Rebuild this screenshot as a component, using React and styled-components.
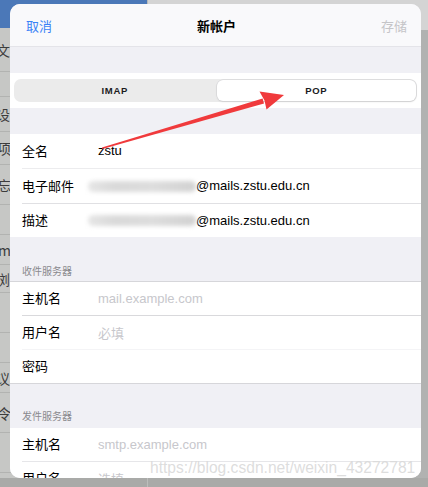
import React from 'react';
import styled, { createGlobalStyle } from 'styled-components';

const GlobalStyle = createGlobalStyle`
  html, body { margin: 0; padding: 0; background: #acadac; }
  body { font-family: "Liberation Sans", "Noto Sans CJK SC", sans-serif; }
`;

const Page = styled.div`
  position: relative;
  width: 428px;
  height: 487px;
  overflow: hidden;
  display: flex;
  flex-direction: column;
  background: #acadac;
`;

const Content = styled.div`
  flex: 1;
  display: flex;
  min-height: 0;
`;

const BottomBar = styled.div`
  height: 9px;
  flex: none;
  display: flex;
  background: #a9aaa8;
`;

const BottomCell = styled.div`
  width: 147px;
  flex: none;
  border-right: 1px solid #bcbdbb;
`;

const Sidebar = styled.div`
  width: 147px;
  flex: none;
  display: flex;
  flex-direction: column;
  overflow: hidden;
  background: #c6c7c5;
  border-right: 1px solid #b9bab8;
`;

const SideHeader = styled.div`
  height: 28px;
  flex: none;
  background: #4b78b8;
`;

const SideRow = styled.div`
  height: ${p => p.$h}px;
  flex: none;
  box-sizing: border-box;
  border-bottom: 1px solid #b2b3b1;
  display: flex;
  align-items: center;
`;

const SideClip = styled.div`
  width: 10px;
  overflow: hidden;
  display: flex;
`;

const SideText = styled.span`
  flex: none;
  margin-left: ${p => p.$x}px;
  font-family: "Noto Sans CJK SC", sans-serif;
  font-size: 14px;
  color: #3c3c3c;
  white-space: nowrap;
`;

const Main = styled.div`
  flex: 1;
  display: flex;
  flex-direction: column;
`;

const MainTop = styled.div`
  height: 30px;
  flex: none;
  background: #d4d4d4;
`;

const MainBody = styled.div`
  flex: 1;
  background: #b1b2b1;
`;

const Sheet = styled.div`
  position: absolute;
  left: 10px;
  top: 4px;
  width: 411px;
  height: 474px;
  border-radius: 10px;
  overflow: hidden;
  background: #f0f0f5;
  display: flex;
  flex-direction: column;
`;

const NavBar = styled.div`
  height: 43px;
  flex: none;
  box-sizing: border-box;
  background: #f9f9fb;
  border-bottom: 1px solid #e4e4e9;
  display: grid;
  grid-template-columns: 1fr auto 1fr;
  align-items: center;
  padding: 0 14px 0 16px;
  font-family: "Noto Sans CJK SC", sans-serif;
  font-size: 13px;
`;

const NavButton = styled.span`
  color: ${p => (p.$disabled ? '#c5c5c8' : '#3a82f6')};
  justify-self: ${p => (p.$end ? 'end' : 'start')};
`;

const NavTitle = styled.span`
  font-weight: 600;
  color: #000;
`;

const Gap = styled.div`
  height: ${p => p.$h}px;
  flex: none;
`;

const SegBand = styled.div`
  height: 35px;
  flex: none;
  box-sizing: border-box;
  background: #fff;
  padding: 6px 4px 0 4px;
`;

const Segmented = styled.div`
  height: 23px;
  box-sizing: border-box;
  background: #ebebeb;
  border-radius: 7px;
  padding: 1px;
  display: grid;
  grid-template-columns: 1fr 1fr;
  gap: 2px;
`;

const Segment = styled.div`
  display: flex;
  align-items: center;
  justify-content: center;
  border-radius: 6px;
  font-size: 9.5px;
  font-weight: 700;
  letter-spacing: 0.7px;
  color: #1c1c1e;
  background: ${p => (p.$active ? '#fff' : 'transparent')};
  box-shadow: ${p => (p.$active ? '0 0 0 0.5px #cfcfd2, 0 1px 2px rgba(0,0,0,0.1)' : 'none')};
`;

const Group = styled.div`
  flex: none;
  background: #fff;
  display: flex;
  flex-direction: column;
  border-top: ${p => (p.$top ? `1px solid ${p.$top}` : 'none')};
  border-bottom: ${p => (p.$bottom ? `1px solid ${p.$bottom}` : 'none')};
`;

const Row = styled.div`
  height: ${p => p.$h}px;
  flex: none;
  box-sizing: border-box;
  margin-left: 12px;
  border-top: ${p => (p.$sep ? `1px solid ${p.$sep}` : 'none')};
  display: grid;
  grid-template-columns: 76px 1fr;
  align-items: center;
  font-size: 13px;
  color: #000;
`;

const Label = styled.span`
  font-family: "Noto Sans CJK SC", sans-serif;
  line-height: 16px;
  margin-top: -1px;
`;

const Value = styled.span`
  display: flex;
  align-items: center;
  white-space: nowrap;
  line-height: 16px;
  color: ${p => (p.$placeholder ? '#c7c7cc' : '#000')};
  font-family: ${p => (p.$cjk ? '"Noto Sans CJK SC", sans-serif' : '"Liberation Sans", sans-serif')};
`;

const Blur = styled.span`
  display: inline-block;
  width: ${p => p.$w}px;
  height: 11px;
  margin-left: ${p => p.$ml}px;
  border-radius: 5px;
  background: linear-gradient(90deg, #e6e6e6 0%, #d9d9d9 25%, #dddddd 60%, #d2d2d2 100%);
  filter: blur(2px);
`;

const SectionHeader = styled.div`
  height: 44px;
  flex: none;
  box-sizing: border-box;
  display: flex;
  align-items: flex-end;
  padding: 0 0 ${p => p.$pb}px 12px;
  font-family: "Noto Sans CJK SC", sans-serif;
  font-size: 10px;
  line-height: 14px;
  color: #8a8a8e;
`;

const Overlay = styled.svg`
  position: absolute;
  left: 0;
  top: 0;
  pointer-events: none;
`;

const Watermark = styled.div`
  position: absolute;
  left: 150px;
  top: 459px;
  font-family: "Liberation Sans", sans-serif;
  font-size: 15.6px;
  line-height: 18px;
  color: rgba(218, 218, 218, 0.92);
  white-space: nowrap;
  pointer-events: none;
`;

const sideRows = [
  { h: 44, x: -4, t: '文' },
  { h: 25, x: 0, t: '' },
  { h: 35, x: -4, t: '设' },
  { h: 33, x: -17, t: '事项' },
  { h: 40, x: -17, t: '帮忘' },
  { h: 30, x: 0, t: '' },
  { h: 30, x: -2, t: 'm' },
  { h: 28, x: -4, t: '浏' },
  { h: 40, x: 0, t: '' },
  { h: 30, x: 0, t: '' },
  { h: 30, x: -4, t: '议' },
  { h: 40, x: -17, t: '指令' },
  { h: 40, x: 0, t: '' },
];

export default function App() {
  return (
    <>
      <GlobalStyle />
      <Page>
        <Content>
          <Sidebar>
            <SideHeader />
            {sideRows.map((r, i) => (
              <SideRow key={i} $h={r.h}>
                {r.t && (
                  <SideClip>
                    <SideText $x={r.x}>{r.t}</SideText>
                  </SideClip>
                )}
              </SideRow>
            ))}
          </Sidebar>
          <Main>
            <MainTop />
            <MainBody />
          </Main>
        </Content>
        <BottomBar>
          <BottomCell />
        </BottomBar>

        <Sheet>
          <NavBar>
            <NavButton>取消</NavButton>
            <NavTitle>新帐户</NavTitle>
            <NavButton $end $disabled>存储</NavButton>
          </NavBar>
          <Gap $h={26} />
          <SegBand>
            <Segmented>
              <Segment>IMAP</Segment>
              <Segment $active>POP</Segment>
            </Segmented>
          </SegBand>
          <Gap $h={26} />
          <Group>
            <Row $h={34}>
              <Label>全名</Label>
              <Value>zstu</Value>
            </Row>
            <Row $h={35} $sep="#ececee">
              <Label>电子邮件</Label>
              <Value><Blur $w={108} $ml={-10} />@mails.zstu.edu.cn</Value>
            </Row>
            <Row $h={34} $sep="#e0e0e3">
              <Label>描述</Label>
              <Value><Blur $w={108} $ml={-10} />@mails.zstu.edu.cn</Value>
            </Row>
          </Group>
          <SectionHeader $pb={3}>收件服务器</SectionHeader>
          <Group $top="#d6d6da" $bottom="#d6d6da">
            <Row $h={33}>
              <Label>主机名</Label>
              <Value $placeholder>mail.example.com</Value>
            </Row>
            <Row $h={34} $sep="#d9d9dc">
              <Label>用户名</Label>
              <Value $placeholder $cjk>必填</Value>
            </Row>
            <Row $h={34} $sep="#f4f4f6">
              <Label>密码</Label>
              <Value />
            </Row>
          </Group>
          <SectionHeader $pb={5}>发件服务器</SectionHeader>
          <Group>
            <Row $h={33}>
              <Label>主机名</Label>
              <Value $placeholder>smtp.example.com</Value>
            </Row>
            <Row $h={34} $sep="#e6e6e9">
              <Label>用户名</Label>
              <Value $placeholder $cjk>选填</Value>
            </Row>
          </Group>
        </Sheet>

        <Overlay width="428" height="487" viewBox="0 0 428 487">
          <polygon points="102,147.5 102.4,149 264,103.5 262.6,98.5" fill="#f03a3c" />
          <polygon points="284,95 259.5,91.5 264.5,100.5 266.5,109.5" fill="#f03a3c" />
        </Overlay>

        <Watermark>https://blog.csdn.net/weixin_43272781</Watermark>
      </Page>
    </>
  );
}
